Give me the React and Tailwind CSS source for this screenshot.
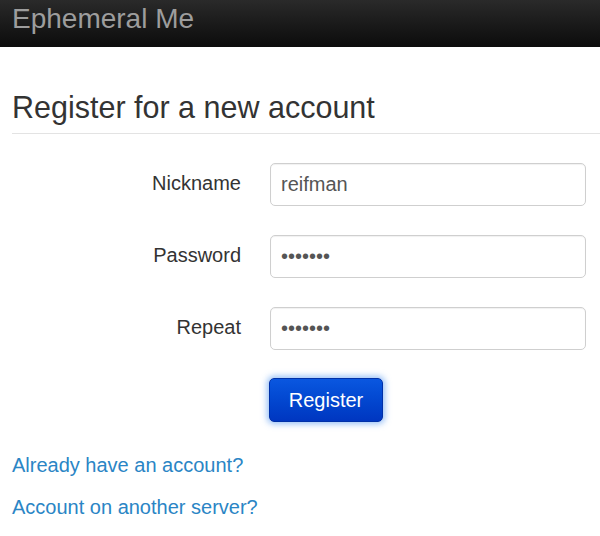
export default function App() {
  return (
    <div className="w-[600px] h-[536px] overflow-hidden bg-white font-['Liberation_Sans',Arial,sans-serif]">
      <div className="h-[47px] bg-gradient-to-b from-[#2a2a2a] to-[#0c0c0c] px-3 flex items-start">
        <span className="text-[28px] leading-[38px] text-[#9d9d9d]">Ephemeral Me</span>
      </div>
      <div className="pl-3">
        <h1 className="mt-[40px] text-[30.5px] leading-[40px] text-[#333] pb-[6px] border-b border-[#e3e3e3]">
          Register for a new account
        </h1>
        <div className="mt-[29px] flex flex-col gap-[29px]">
          {[
            ["Nickname", "reifman"],
            ["Password", "•••••••"],
            ["Repeat", "•••••••"],
          ].map(([label, value]) => (
            <div key={label} className="flex items-center">
              <label className="w-[258px] text-right pr-[29px] pb-[3px] text-[20px] text-[#333]">{label}</label>
              <div className="w-[316px] h-[43px] border border-[#cfcfcf] rounded-[5px] shadow-[inset_0_1px_1px_rgba(0,0,0,0.06)] flex items-center px-[10px]">
                <span className="text-[20px] text-[#555] pb-[1px]">{value}</span>
              </div>
            </div>
          ))}
        </div>
        <div className="mt-[28px] pl-[257px]">
          <button className="w-[114px] h-[44px] rounded-[5px] bg-gradient-to-b from-[#0a57e0] to-[#0036c0] border border-[#0030a8] text-white text-[20px] shadow-[0_0_6px_2px_rgba(82,150,240,0.6)]">
            Register
          </button>
        </div>
        <div className="mt-[28px] flex flex-col gap-[12px] text-[20px] text-[#2a85c5]">
          <a>Already have an account?</a>
          <a>Account on another server?</a>
        </div>
      </div>
    </div>
  );
}
